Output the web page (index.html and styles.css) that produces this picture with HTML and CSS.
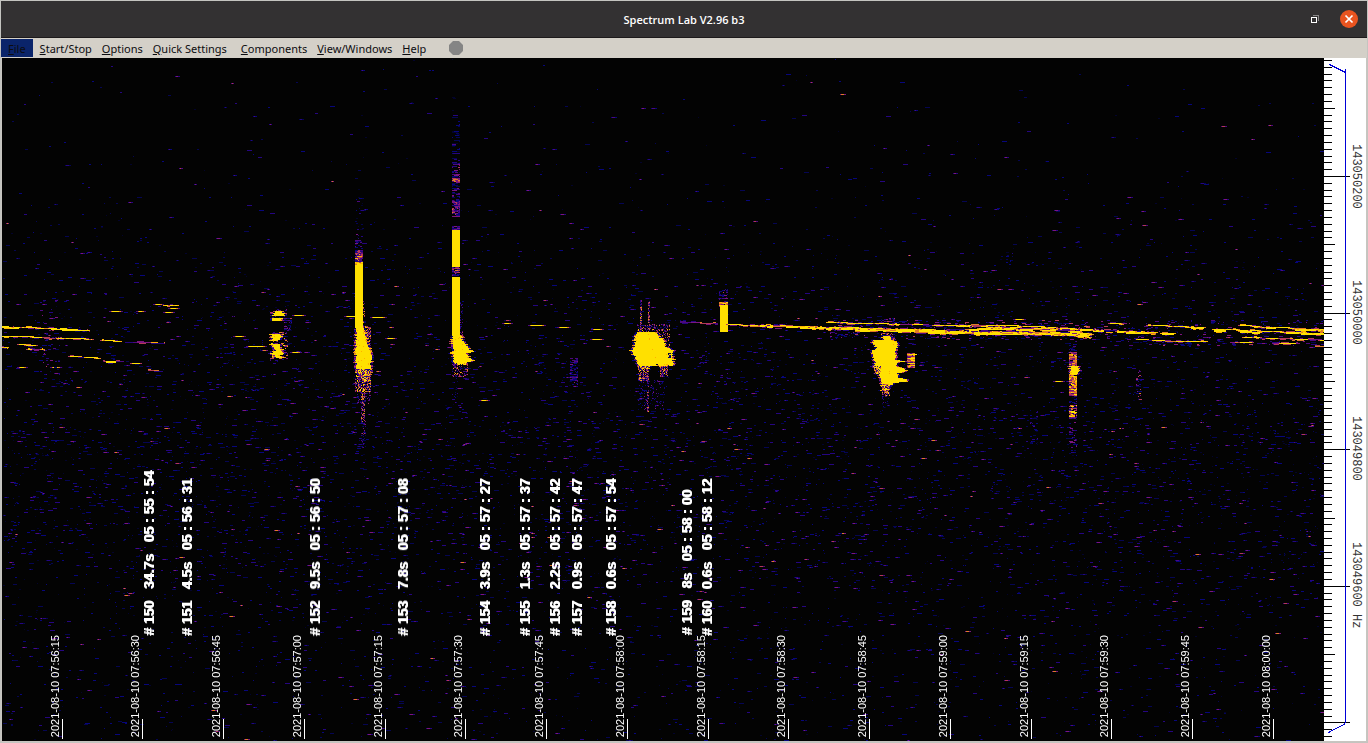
FILE: index.html
```html
<!DOCTYPE html>
<html lang="en">
<head>
<meta charset="utf-8">
<title>Spectrum Lab V2.96 b3</title>
<link rel="stylesheet" href="styles.css">
</head>
<body>
<div class="window">
  <header class="titlebar">
    <h1 class="title">Spectrum Lab V2.96 b3</h1>
    <div class="controls">
      <button class="control" type="button" aria-label="Restore">
        <svg width="10" height="10" viewBox="0 0 10 10" fill="none" shape-rendering="crispEdges"><path d="M3 1.5h5.5V7" stroke="#8a8888"/><path d="M1 3.5h5M1 8.5h6M1.5 3v6M6.5 3v6" stroke="#fff"/></svg>
      </button>
      <button class="control close" type="button" aria-label="Close">
        <svg width="18" height="18" viewBox="0 0 18 18"><path d="M5.5 5.5l7 7M12.5 5.5l-7 7" stroke="#fff" stroke-width="1.7"/></svg>
      </button>
    </div>
  </header>
  <nav class="menubar">
    <button class="menu active" type="button"><u>F</u>ile</button>
    <button class="menu" type="button"><u>S</u>tart/Stop</button>
    <button class="menu" type="button"><u>O</u>ptions</button>
    <button class="menu wide" type="button"><u>Q</u>uick Settings</button>
    <button class="menu" type="button"><u>C</u>omponents</button>
    <button class="menu" type="button"><u>V</u>iew/Windows</button>
    <button class="menu" type="button"><u>H</u>elp</button>
    <svg class="status" width="16" height="16" viewBox="0 0 16 16"><path d="M5 1h6l4 4v6l-4 4H5l-4-4V5z" fill="#858585"/></svg>
  </nav>
  <main class="display">
    <section class="plot" id="plot">
      <canvas class="waterfall" id="waterfall" width="1322" height="683"></canvas>
    </section>
    <aside class="axis">
      <svg class="scale" width="42" height="683" viewBox="0 0 42 683" shape-rendering="crispEdges">
        <path id="ticks" fill="none" stroke="#000"/>
        <path d="M5.5 6.5L21.5 14.5M21.5 11v654M21.5 665.5L4.5 674.5" fill="none" stroke="#0000d8"/>
      </svg>
      <span class="freq" style="--y:86">143050200</span>
      <span class="freq" style="--y:222">143050000</span>
      <span class="freq" style="--y:358">143049800</span>
      <span class="freq" style="--y:484">143049600 Hz</span>
    </aside>
  </main>
</div>
<script src="app.js"></script>
</body>
</html>
```
FILE: styles.css
```css
* { box-sizing: border-box; }

body {
  margin: 0;
  background: #c8c5c0;
  font-family: "Noto Sans", "Open Sans", sans-serif;
}

.window {
  display: flex;
  flex-direction: column;
  min-height: 100vh;
  border: 1px solid #c4c4c0;
}

.titlebar {
  display: grid;
  grid-template-columns: 1fr auto 1fr;
  align-items: center;
  height: 37px;
  background: #333132;
  border-bottom: 1px solid #1d1a1b;
}

.title {
  grid-column: 2;
  margin: 0;
  color: #fff;
  font-family: "Open Sans", "Noto Sans", sans-serif;
  font-size: 11px;
  font-weight: 600;
}

.controls {
  display: flex;
  align-items: center;
  justify-content: flex-end;
  gap: 20px;
  padding-right: 9px;
}

.control {
  display: flex;
  padding: 0;
  border: 0;
  background: none;
}

.close {
  border-radius: 50%;
  background: #e95420;
}

.menubar {
  display: flex;
  align-items: center;
  height: 20px;
  padding-bottom: 1px;
  background: #d4d0c8;
}

.menu {
  height: 18px;
  padding: 1px 5px 0;
  border: 0;
  background: none;
  color: #0c0c10;
  font-family: inherit;
  font-size: 11px;
  line-height: 17px;
}

.menu.wide { padding-right: 9px; }

.menu.active {
  margin-right: 2px;
  padding: 1px 7px 0;
  background: #0a246a;
}

.status { margin-left: 17px; }

.display {
  display: flex;
  flex: 1;
  padding: 0 1px 1px;
}

.plot {
  position: relative;
  flex: 1;
  min-height: 683px;
  overflow: hidden;
  background: #030303;
}

.waterfall {
  display: block;
  width: 100%;
  height: 100%;
  image-rendering: pixelated;
}

.axis {
  position: relative;
  width: 42px;
  background: #fff;
}

.scale { display: block; }

.freq {
  position: absolute;
  top: calc(var(--y) * 1px);
  left: 25px;
  color: #333;
  font: 12px/14px "Liberation Mono", monospace;
  writing-mode: vertical-rl;
  white-space: pre;
}

.time,
.event {
  position: absolute;
  left: calc(var(--x) / 1322 * 100%);
  writing-mode: vertical-rl;
  transform: rotate(180deg);
  white-space: pre;
}

.time {
  bottom: 2px;
  margin-left: -14px;
  padding-top: 2px;
  color: #fff;
  font: 11px/14px "Liberation Sans", sans-serif;
}

.mark {
  position: absolute;
  bottom: 2px;
  left: calc(var(--x) / 1322 * 100%);
  width: 1px;
  height: 20px;
  background: #fff;
}

.event {
  bottom: 105px;
  margin-left: -8px;
  color: #fff;
  font: bold 14px/16px "Liberation Sans", sans-serif;
  text-shadow: 1px 0 #fff;
}
```
FILE: app.js
```js
const plot = document.getElementById('plot');

function addLabel(cls, x, text) {
  const el = document.createElement('span');
  el.className = cls;
  el.style.setProperty('--x', x);
  el.textContent = text;
  plot.append(el);
}

const times = [
  [60, '07:56:15'], [140, '07:56:30'], [221, '07:56:45'], [302, '07:57:00'],
  [383, '07:57:15'], [463, '07:57:30'], [544, '07:57:45'], [625, '07:58:00'],
  [706, '07:58:15'], [786, '07:58:30'], [867, '07:58:45'], [948, '07:59:00'],
  [1029, '07:59:15'], [1109, '07:59:30'], [1190, '07:59:45'], [1271, '08:00:00']
];
times.forEach(([x, t]) => {
  addLabel('time', x, '2021-08-10 ' + t);
  addLabel('mark', x, '');
});

const events = [
  [147, '# 150   34.7s   05 : 55 : 54'], [185, '# 151   4.5s   05 : 56 : 31'],
  [313, '# 152   9.5s   05 : 56 : 50'], [401, '# 153   7.8s   05 : 57 : 08'],
  [483, '# 154   3.9s   05 : 57 : 27'], [523, '# 155   1.3s   05 : 57 : 37'],
  [553, '# 156   2.2s   05 : 57 : 42'], [575, '# 157   0.9s   05 : 57 : 47'],
  [609, '# 158   0.6s   05 : 57 : 54'], [685, '# 159   8s   05 : 58 : 00'],
  [705, '# 160   0.6s   05 : 58 : 12']
];
events.forEach(([x, t]) => addLabel('event', x, t));

// Frequency scale: long tick every 20 steps, medium every 10
let d = '';
for (let k = -17; k <= 82; k++) {
  const y = Math.round(118 + k * 6.83) + 0.5;
  const len = k % 20 === 0 ? 26 : k % 10 === 0 ? 11 : 8;
  if (y > 0 && y < 683) d += `M0 ${y}h${len}`;
}
document.getElementById('ticks').setAttribute('d', d);

// Waterfall
const ctx = document.getElementById('waterfall').getContext('2d');
ctx.fillStyle = '#030303';
ctx.fillRect(0, 0, 1322, 683);
ctx.translate(-2, -58); // window coordinates

let seed = 20210810;
function rnd() {
  seed = (seed + 0x6d2b79f5) | 0;
  let t = Math.imul(seed ^ (seed >>> 15), 1 | seed);
  t = (t + Math.imul(t ^ (t >>> 7), 61 | t)) ^ t;
  return ((t ^ (t >>> 14)) >>> 0) / 4294967296;
}
const between = (a, b) => a + rnd() * (b - a);
const palette = ['#03032c', '#050553', '#07067c', '#250581', '#4d087f', '#7d1580', '#b23a58', '#e07b28', '#ffb000', '#ffe000'];
function dot(x, y, w, level) {
  ctx.fillStyle = palette[Math.max(0, Math.min(9, Math.floor(level)))];
  ctx.fillRect(Math.round(x), Math.round(y), Math.round(w), 1);
}

function noiseDensity(y) {
  const points = [[58, .04], [150, .07], [230, .18], [280, .45], [320, .65], [380, .75], [440, 1], [530, .9], [600, .55], [650, .35], [741, .28]];
  for (let i = 1; i < points.length; i++) {
    if (y <= points[i][0]) {
      const [y0, a] = points[i - 1], [y1, b] = points[i];
      return a + (b - a) * (y - y0) / (y1 - y0);
    }
  }
  return .3;
}
for (let i = 0; i < 17500; i++) {
  const x = between(2, 1322), y = between(58, 740);
  if (rnd() > noiseDensity(y)) continue;
  const r = rnd();
  if (r < .46) dot(x, y, 1 + Math.floor(rnd() * 2), between(0, 3));
  else if (r < .82) dot(x, y, 2 + Math.floor(rnd() * 4), between(1, 3.7));
  else {
    const w = 3 + Math.floor(rnd() * 4);
    const level = r < .965 ? between(3, 5.8) : between(5, 7.6);
    dot(x, y, w, level - 2);
    dot(x + 1, y, Math.max(1, w - 3), level);
  }
}

// Speckled rectangle: coverage 0..1, levels lo..hi
function speckle(x0, y0, x1, y1, cover, lo, hi, maxWidth = 3) {
  for (let y = y0; y < y1; y++) {
    const row = between(-1, 1);
    for (let x = x0; x < x1;) {
      const w = Math.min(1 + Math.floor(rnd() * maxWidth), x1 - x);
      if (rnd() < cover) dot(x, y, w, between(lo, hi) + row);
      x += w;
    }
  }
}

// Solid echo with ragged edges, given as rows of [y, left, right]
function echo(rows, rag) {
  for (let i = 1; i < rows.length; i++) {
    const [ya, la, ra] = rows[i - 1], [yb, lb, rb] = rows[i];
    for (let y = ya; y < yb; y++) {
      const t = (y - ya) / (yb - ya);
      const l = Math.round(la + (lb - la) * t + between(-rag, rag));
      const r = Math.round(ra + (rb - ra) * t + between(-rag, rag));
      if (rag) {
        dot(l - 2, y, 2, between(0, 9));
        dot(r, y, 2, between(0, 9));
      }
      dot(l, y, r - l, 9);
      if (rag && rnd() < .3) dot(between(l, r), y, 1, 8);
    }
  }
}

// Drifting carrier along a polyline
function trail(points, thick, cover) {
  for (let i = 1; i < points.length; i++) {
    const [xa, ya] = points[i - 1], [xb, yb] = points[i];
    for (let x = xa; x < xb;) {
      const w = Math.min(3 + Math.floor(rnd() * 13), xb - x);
      const y = ya + (yb - ya) * (x - xa) / (xb - xa);
      if (rnd() < cover) {
        dot(x - 2, y, w + 4, between(6, 9));
        for (let k = 0; k < thick; k++) dot(x, y + k, w, k && rnd() < .15 ? 7 : 9);
      } else dot(x, y, w, between(3, 8));
      if (rnd() < .5) dot(x, y - 1, Math.ceil(w / 2), between(3, 9));
      if (rnd() < .5) dot(x + 2, y + thick, Math.ceil(w / 2), between(3, 9));
      x += w;
    }
  }
}

// Left-hand drifting lines
trail([[2, 327], [14, 327], [44, 328]], 1, .95);
dot(2, 326, 7, 9); dot(10, 328, 9, 9); dot(26, 327, 10, 9);
trail([[48, 328], [60, 329], [88, 330]], 1, 1);
dot(49, 328, 18, 9); dot(51, 329, 27, 9); dot(62, 330, 27, 9);
trail([[2, 336], [20, 336], [42, 337]], 1, .95);
trail([[44, 338], [66, 338], [92, 339]], 1, .6);
trail([[102, 340], [120, 341]], 1, 1);
trail([[125, 342], [165, 343]], 1, .1);
trail([[2, 347], [7, 347]], 1, 1);
trail([[19, 344], [26, 345], [36, 347]], 1, .9);
trail([[28, 349], [43, 349]], 1, .5);
trail([[70, 356], [86, 357], [99, 358]], 1, .7);
trail([[103, 361], [124, 361]], 2, .6);
trail([[132, 363], [140, 363]], 1, 1);
trail([[148, 370], [163, 373]], 1, .3);
trail([[165, 305], [177, 305]], 1, 1);
[[112, 311, 8], [171, 308, 6], [166, 312, 6], [156, 304, 5], [139, 311, 4], [53, 367, 6], [20, 367, 5], [236, 336, 7],
 [249, 346, 15], [295, 315, 8], [293, 352, 6], [347, 316, 9], [373, 317, 11], [388, 338, 6],
 [531, 325, 12], [560, 327, 8], [594, 329, 7], [593, 339, 8], [505, 323, 5],
 [1016, 319, 7], [1056, 381, 6], [482, 400, 5]
].forEach(([x, y, w]) => { dot(x - 3, y, w + 6, 4); dot(x - 1, y, w + 2, 7); dot(x, y, w - 1, 9); });
speckle(40, 300, 60, 380, .06, 1, 6);

// 07:56:55 broken echo
speckle(270, 309, 287, 323, .3, 2, 7);
echo([[311, 275, 281], [313, 274, 284], [316, 272, 285]], 1);
echo([[318, 272, 283], [321, 272, 280]], 1);
speckle(270, 331, 288, 361, .35, 3, 9);
echo([[334, 271, 280], [336, 271, 284], [338, 272, 280], [341, 272, 277]], 1);
echo([[344, 272, 280], [346, 273, 280], [350, 276, 281], [353, 271, 285], [355, 275, 279], [358, 277, 285]], 1);
speckle(284, 318, 292, 331, .4, 1, 6);

// 07:57:11 echo
speckle(355, 170, 363, 234, .08, 0, 4);
speckle(355, 234, 363, 250, .4, 1, 5);
speckle(355, 250, 363, 263, .95, 3, 8);
speckle(355, 262, 363, 275, 1, 7, 10);
echo([[265, 355, 363], [372, 355, 363]], 0);
speckle(363, 300, 365, 328, .35, 3, 8, 1);
speckle(363, 326, 371, 352, .7, 3, 9, 1);
echo([[328, 356, 364], [340, 356, 366], [350, 356, 370], [358, 356, 373], [363, 356, 371], [370, 357, 371], [378, 362, 367], [382, 363, 365]], 1);
speckle(355, 369, 371, 392, .68, 2, 9, 1);
speckle(357, 392, 371, 404, .3, 1, 6, 1);
speckle(361, 392, 365, 425, .6, 2, 8, 1);
speckle(361, 420, 366, 448, .3, 1, 6, 1);

// 07:57:29 echo
speckle(452, 90, 458, 120, .08, 0, 2);
speckle(452, 115, 460, 160, .25, 0, 4, 8);
speckle(452, 160, 460, 217, .5, 1, 6, 6);
speckle(452, 178, 460, 182, .9, 4, 7);
speckle(452, 201, 460, 215, .7, 3, 7);
speckle(452, 226, 460, 230, .9, 2, 6);
echo([[230, 452, 460], [267, 452, 460]], 0);
speckle(452, 267, 460, 276, .85, 2, 7);
echo([[277, 452, 460], [340, 452, 460]], 0);
speckle(460, 300, 463, 340, .3, 2, 7, 1);
echo([[335, 452, 461], [343, 452, 464], [346, 453, 468], [349, 453, 469], [351, 453, 474], [353, 453, 467], [357, 453, 468], [360, 453, 473], [362, 454, 467], [365, 457, 465]], 1);
speckle(452, 363, 468, 377, .4, 1, 8, 1);
speckle(452, 377, 458, 405, .12, 0, 4, 1);

// 07:58:05 large echo
speckle(640, 300, 642, 334, .75, 2, 8, 1);
speckle(648, 300, 650, 334, .7, 2, 8, 1);
speckle(637, 324, 670, 350, .4, 2, 8, 1);
echo([[332, 638, 656], [336, 635, 659], [341, 635, 665], [346, 634, 665], [350, 632, 673], [355, 634, 672], [360, 637, 673], [366, 638, 674]], 1);
speckle(668, 353, 671, 358, .8, 0, 4, 1);
echo([[366, 639, 649], [369, 642, 648]], 1);
echo([[364, 659, 666], [368, 661, 665]], 1);
speckle(638, 366, 649, 381, .75, 2, 9, 1);
speckle(660, 366, 668, 377, .75, 2, 9, 1);
speckle(638, 380, 664, 410, .12, 1, 5, 1);
speckle(647, 375, 649, 412, .5, 2, 8, 1);

// Weak echoes
speckle(570, 358, 578, 385, .5, 1, 5);
speckle(699, 355, 707, 364, .45, 1, 4);
speckle(720, 371, 728, 386, .22, 1, 4);
speckle(1136, 370, 1142, 402, .25, 1, 7);
speckle(1030, 410, 1038, 445, .18, 1, 5);
speckle(1006, 250, 1013, 265, .18, 1, 3);

// 07:58:18 short echo
speckle(719, 289, 728, 303, .38, 2, 6);
speckle(719, 302, 728, 307, .95, 6, 9);
echo([[305, 720, 728], [332, 720, 728]], 0);

// Aircraft reflection across the right half
speckle(830, 320, 1110, 340, .14, 1, 7, 4);
speckle(1110, 320, 1324, 346, .1, 1, 6, 4);
trail([[680, 322], [718, 323]], 1, .1);
trail([[728, 324], [750, 325], [775, 325], [800, 326], [860, 328]], 1, 1);
trail([[750, 325], [810, 327], [870, 329]], 2, .8);
trail([[828, 322], [900, 324], [975, 326], [1020, 328], [1080, 329]], 1, .85);
trail([[855, 328], [940, 331], [1000, 331], [1060, 332]], 3, .95);
trail([[855, 329], [900, 329], [945, 330]], 3, .9);
trail([[950, 331], [990, 332], [1090, 333]], 3, .85);
trail([[950, 329], [1000, 328], [1080, 331]], 2, .7);
trail([[960, 325], [1000, 325], [1060, 328], [1120, 331], [1156, 332]], 1, .9);
trail([[1020, 333], [1060, 335], [1090, 337]], 1, .9);
trail([[1080, 329], [1104, 330], [1126, 332], [1156, 332]], 2, .9);
trail([[1080, 334], [1092, 334]], 1, .9);
trail([[1162, 333], [1174, 333]], 2, .9);
trail([[1110, 323], [1122, 324]], 1, .7);
trail([[1148, 325], [1178, 326], [1190, 327]], 1, .8);
trail([[1191, 327], [1204, 328]], 2, 1);
trail([[1214, 329], [1226, 329]], 3, 1);
trail([[1226, 329], [1250, 330], [1286, 332], [1324, 333]], 1, .95);
trail([[1240, 331], [1260, 332]], 2, .9);
trail([[1286, 332], [1324, 334]], 2, .95);
trail([[1240, 325], [1262, 327], [1294, 328], [1324, 330]], 1, .8);
trail([[1266, 327], [1276, 327]], 2, 1);
trail([[1295, 329], [1324, 330]], 2, .8);
trail([[1138, 339], [1154, 340], [1176, 341], [1206, 341]], 1, .9);
trail([[1230, 342], [1252, 342]], 1, .7);
trail([[1244, 337], [1265, 338], [1295, 339], [1324, 340]], 1, .65);
trail([[1272, 343], [1300, 343]], 1, .1);
trail([[1315, 346], [1324, 347]], 1, .3);

// 07:58:48 echo
speckle(881, 318, 895, 324, .4, 2, 7, 2);
speckle(881, 333, 895, 341, .7, 3, 9, 2);
echo([[336, 884, 890], [340, 883, 891]], 1);
echo([[340, 873, 892], [342, 873, 898], [347, 876, 897], [350, 873, 895], [354, 872, 896], [359, 874, 896], [361, 875, 905], [362, 875, 897], [366, 873, 896], [368, 877, 904], [371, 878, 905], [373, 877, 897], [377, 881, 899], [379, 881, 907], [381, 882, 906], [383, 882, 893], [387, 883, 889], [391, 883, 886]], 1);
speckle(872, 366, 881, 374, .45, 2, 8, 1);
speckle(882, 384, 890, 397, .75, 3, 9, 1);
speckle(882, 397, 889, 410, .2, 1, 4, 1);
speckle(907, 353, 915, 368, .95, 5, 9);
dot(909, 354, 8, 9); dot(908, 358, 7, 9); dot(908, 363, 7, 9);

// 07:59:23 striped echo
speckle(1069, 340, 1077, 352, .35, 1, 4);
speckle(1069, 352, 1077, 396, .95, 5, 10);
echo([[366, 1070, 1078], [371, 1071, 1079], [375, 1071, 1077]], 1);
speckle(1069, 396, 1077, 405, .3, 1, 4);
speckle(1069, 405, 1077, 419, .85, 3, 9);
speckle(1069, 419, 1077, 456, .25, 1, 6);
```
